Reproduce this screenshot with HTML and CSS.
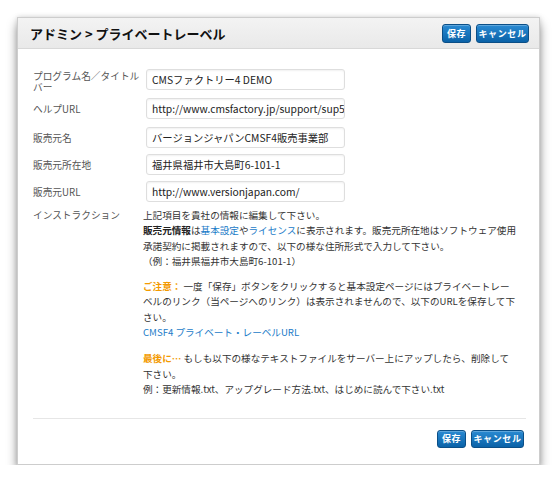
FILE: index.html
```html
<!DOCTYPE html>
<html lang="ja">
<head>
<meta charset="utf-8">
<link rel="stylesheet" href="styles.css">
</head>
<body>
<div class="panel">
  <div class="header">
    <h1 class="title">アドミン &gt; プライベートレーベル</h1>
    <div class="actions">
      <button class="btn btn-save">保存</button>
      <button class="btn btn-cancel">キャンセル</button>
    </div>
  </div>
  <div class="content">
    <div class="row row-first">
      <label class="label label-wrap">プログラム名／タイトルバー</label>
      <div class="field">CMSファクトリー4 DEMO</div>
    </div>
    <div class="row">
      <label class="label">ヘルプURL</label>
      <div class="field">http://www.cmsfactory.jp/support/sup5</div>
    </div>
    <div class="row row-group">
      <label class="label">販売元名</label>
      <div class="field">バージョンジャパンCMSF4販売事業部</div>
    </div>
    <div class="row">
      <label class="label">販売元所在地</label>
      <div class="field">福井県福井市大島町6-101-1</div>
    </div>
    <div class="row">
      <label class="label">販売元URL</label>
      <div class="field">http://www.versionjapan.com/</div>
    </div>
    <div class="row row-instr">
      <div class="label">インストラクション</div>
      <div class="instr">
        <p>上記項目を貴社の情報に編集して下さい。<br><b>販売元情報</b>は<a>基本設定</a>や<a>ライセンス</a>に表示されます。販売元所在地はソフトウェア使用<br>承諾契約に掲載されますので、以下の様な住所形式で入力して下さい。<br>（例：福井県福井市大島町6-101-1）</p>
        <p class="p2"><b class="warn">ご注意：</b> 一度「保存」ボタンをクリックすると基本設定ページにはプライベートレー<br>ベルのリンク（当ページへのリンク）は表示されませんので、以下のURLを保存して下<br>さい。<br><a>CMSF4 プライベート・レーベルURL</a></p>
        <p class="p3"><b class="warn">最後に…</b> もしも以下の様なテキストファイルをサーバー上にアップしたら、削除して<br>下さい。<br>例：更新情報.txt、アップグレード方法.txt、はじめに読んで下さい.txt</p>
      </div>
    </div>
  </div>
  <div class="footer">
    <button class="btn btn-save">保存</button>
    <button class="btn btn-cancel">キャンセル</button>
  </div>
</div>
</body>
</html>
```
FILE: styles.css
```css
* { box-sizing: border-box; }
html, body { margin: 0; padding: 0; background: #fff; }
body {
  font-family: "Noto Sans CJK JP", "Noto Sans", sans-serif;
  color: #333;
}
.panel {
  margin: 17px 0 0 17px;
  width: 523px;
  height: 448px;
  border: 1px solid #cdcdcd;
  background: #fff;
  box-shadow: 0 7px 10px rgba(0,0,0,0.4), 0 0 5px rgba(0,0,0,0.15);
  display: flex;
  flex-direction: column;
}
.header {
  height: 31px;
  border-bottom: 1px solid #d8d8d8;
  background: linear-gradient(#f3f3f3, #e9e9e9);
  display: flex;
  align-items: center;
  justify-content: space-between;
  padding: 0 10px 0 12px;
}
.title {
  margin: 0;
  font-size: 13px;
  font-weight: bold;
  color: #111;
}
.actions { display: flex; gap: 5px; margin-top: 1px; }
.btn {
  font-family: inherit;
  height: 19px;
  padding: 0;
  border: 1px solid #0b4f87;
  border-radius: 3px;
  background: linear-gradient(#2a8ad2, #0a62a8);
  color: #fff;
  font-size: 9px;
  font-weight: bold;
  letter-spacing: 0.6px;
  line-height: 17px;
  white-space: nowrap;
  text-align: center;
  box-shadow: inset 0 1px 0 rgba(255,255,255,0.25);
}
.btn-save { width: 29px; }
.btn-cancel { width: 53px; }
.content {
  flex: 1;
  padding: 18px 15px 0 15px;
}
.row {
  display: flex;
  align-items: center;
  margin-bottom: 6px;
}
.row-group { margin-top: 8px; }
.label {
  width: 113px;
  flex: none;
  font-size: 9.7px;
  color: #555;
}
.label-wrap {
  line-height: 10.5px;
  align-self: flex-start;
  padding-top: 4px;
}
.field {
  width: 199px;
  height: 21px;
  border: 1px solid #dedede;
  border-radius: 3px;
  box-shadow: inset 0 1px 2px rgba(0,0,0,0.06);
  padding: 0 5px;
  font-size: 10.3px;
  line-height: 19px;
  color: #222;
  white-space: nowrap;
  overflow: hidden;
}
.row-instr {
  align-items: flex-start;
  margin-top: 2px;
}
.row-instr .label { line-height: 15.5px; }
.instr {
  font-size: 9.6px;
  line-height: 15.3px;
  color: #333;
  white-space: nowrap;
  margin-left: -3px;
}
.instr p { margin: 0; }
.instr .p2 { margin-top: 10px; }
.instr .p3 { margin-top: 11px; }
.instr a { color: #1a7bc8; }
.instr b { color: #222; }
.instr .warn { color: #f39a00; }
.footer {
  margin: 0 13px 0 15px;
  border-top: 1px solid #e6e6e6;
  height: 46px;
  display: flex;
  justify-content: flex-end;
  align-items: flex-start;
  gap: 5px;
  padding: 11px 2px 0 0;
}
.footer .btn { height: 18px; line-height: 16px; }
```
